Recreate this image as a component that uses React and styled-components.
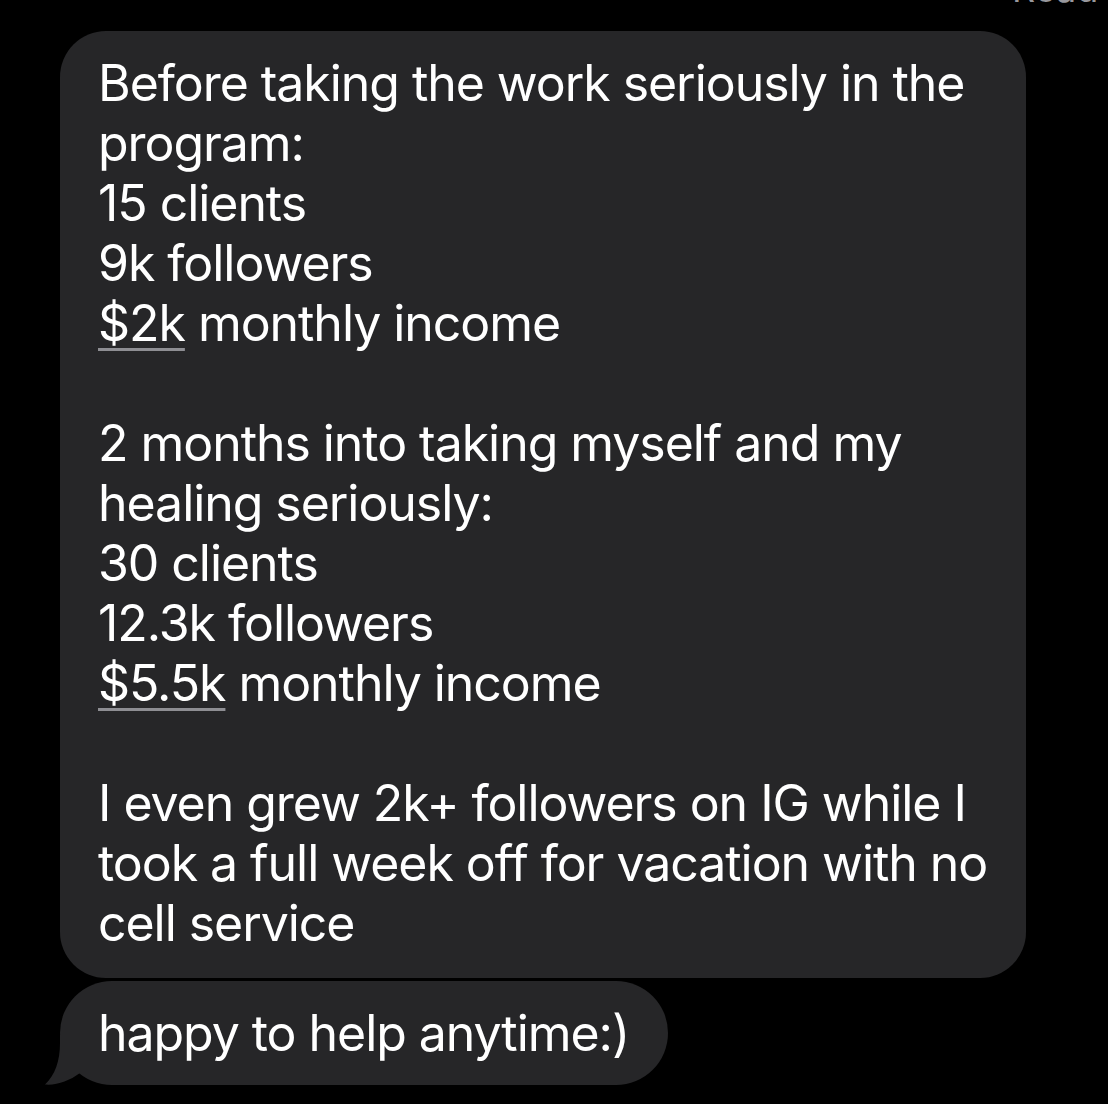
import React from "react";
import styled, { createGlobalStyle } from "styled-components";

const Global = createGlobalStyle`
  html, body {
    margin: 0;
    padding: 0;
    background: #000;
  }
  body {
    font-family: Inter, "Noto Sans", "Liberation Sans", sans-serif;
    -webkit-font-smoothing: antialiased;
    overflow: hidden;
  }
`;

const Screen = styled.div`
  width: 1108px;
  height: 1104px;
  background: #000;
  overflow: hidden;
  display: flex;
  flex-direction: column;
`;

const Status = styled.div`
  height: 8px;
  overflow: hidden;
  display: flex;
  align-items: flex-end;
  padding-left: 1012px;
  margin-bottom: 23px;
  white-space: nowrap;
`;

const StatusText = styled.span`
  font-size: 36px;
  line-height: 36px;
  color: #98989d;
  transform: translateY(-1px);
`;

const Thread = styled.div`
  display: flex;
  flex-direction: column;
  align-items: flex-start;
  gap: 3px;
  padding-left: 60px;
`;

const Bubble = styled.div`
  position: relative;
  box-sizing: border-box;
  width: ${(p) => p.$width}px;
  padding: 22px 38px ${(p) => p.$padBottom}px 38px;
  background: #262628;
  border-radius: ${(p) => p.$radius}px;
  color: #fff;
  font-size: 50px;
  line-height: 60px;
  letter-spacing: ${(p) => p.$spacing}px;
`;

const Line = styled.div`
  white-space: nowrap;
  min-height: 60px;
`;

const Link = styled.span`
  text-decoration: underline;
  text-decoration-color: #8e8e93;
  text-decoration-thickness: 3px;
  text-underline-offset: 7px;
`;

const Tail = styled.svg`
  position: absolute;
  left: -16px;
  bottom: 0;
  width: 40px;
  height: 50px;
`;

const first = [
  ["Before taking the work seriously in the"],
  ["program:"],
  ["15 clients"],
  ["9k followers"],
  [<Link key="a">$2k</Link>, " monthly income"],
  [""],
  ["2 months into taking myself and my"],
  ["healing seriously:"],
  ["30 clients"],
  ["12.3k followers"],
  [<Link key="b">$5.5k</Link>, " monthly income"],
  [""],
  ["I even grew 2k+ followers on IG while I"],
  ["took a full week off for vacation with no"],
  ["cell service"],
];

export default function App() {
  return (
    <Screen>
      <Global />
      <Status>
        <StatusText>Read 2:41 PM</StatusText>
      </Status>
      <Thread>
        <Bubble $width={966} $radius={46} $padBottom={25} $spacing={-1.05}>
          {first.map((parts, i) => (
            <Line key={i}>{parts}</Line>
          ))}
        </Bubble>
        <Bubble $width={608} $radius={52} $padBottom={22} $spacing={-1.05}>
          <Line>happy to help anytime:)</Line>
          <Tail viewBox="0 0 40 50">
            <path
              d="M16 0 L16 8 C16 26 11 40 1 49.5 C13 50.5 25 46 36 38 L40 40 L40 0 Z"
              fill="#262628"
            />
          </Tail>
        </Bubble>
      </Thread>
    </Screen>
  );
}
